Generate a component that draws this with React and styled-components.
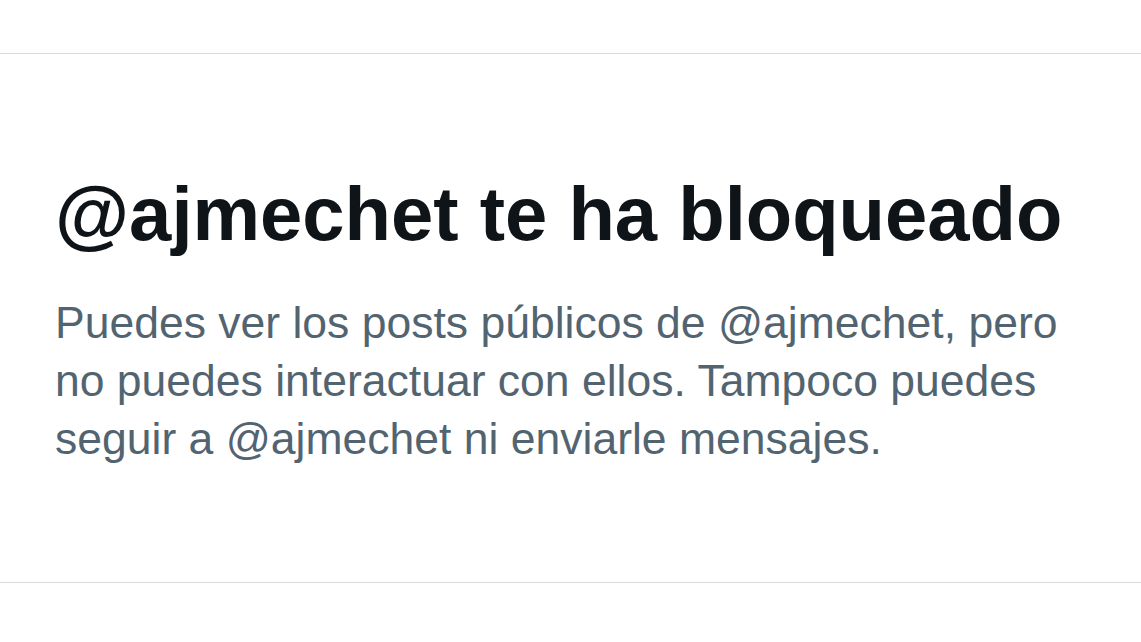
import styled, { createGlobalStyle } from "styled-components";

const GlobalStyle = createGlobalStyle`
  html, body {
    margin: 0;
    padding: 0;
    background: #ffffff;
  }
  body {
    font-family: "Liberation Sans", Arial, sans-serif;
  }
`

const Page = styled.div`
  padding-top: 53px;
  height: 642px;
  box-sizing: border-box;
`

const Panel = styled.section`
  border-top: 1px solid #d8dbdd;
  border-bottom: 1px solid #d8dbdd;
  height: 530px;
  box-sizing: border-box;
  padding: 118px 55px 0 55px;
`

const Title = styled.h1`
  margin: 0;
  font-size: 76px;
  line-height: 84px;
  font-weight: 700;
  color: #0f1419;
  letter-spacing: 0;
  white-space: nowrap;
`

const Description = styled.p`
  margin: 38px 0 0 0;
  font-size: 44.5px;
  line-height: 58px;
  font-weight: 400;
  color: #536471;
  max-width: 1020px;
`

const BlockedNotice = ({ handle }) => {
    const title = `@${handle} te ha bloqueado`
    const text = `Puedes ver los posts públicos de @${handle}, pero no puedes interactuar con ellos. Tampoco puedes seguir a @${handle} ni enviarle mensajes.`

    return (
        <Panel>
            <Title>{title}</Title>
            <Description>{text}</Description>
        </Panel>
    )
}

const App = () => {
    return (
        <>
            <GlobalStyle />
            <Page>
                <BlockedNotice handle='ajmechet' />
            </Page>
        </>
    )
}

export default App
